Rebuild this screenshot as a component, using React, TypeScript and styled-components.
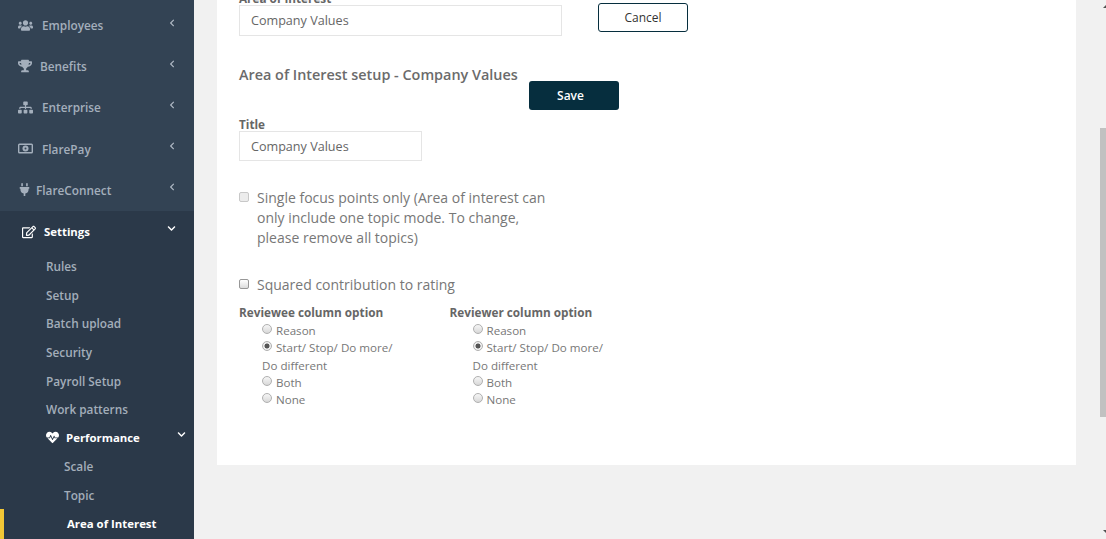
import React from 'react';
import styled, { createGlobalStyle } from 'styled-components';
import {
	FaChevronDown,
	FaChevronLeft,
	FaHeartbeat,
	FaPlug,
	FaRegEdit,
	FaSitemap,
	FaTrophy,
	FaUsers,
} from 'react-icons/fa';

const GlobalStyle = createGlobalStyle`
	html, body {
		margin: 0;
		height: 100%;
		overflow: hidden;
		background: #f1f1f1;
		font-family: "Open Sans", "Liberation Sans", sans-serif;
		color: #6b6b6b;
	}
`;

const Page = styled.div`
	display: flex;
	width: 1106px;
	height: 539px;
	overflow: hidden;
	position: relative;
`;

const Sidebar = styled.nav`
	width: 194px;
	flex: none;
	height: 539px;
	background: #334354;
	overflow: hidden;
`;

const TopLinks = styled.div`
	padding-top: 4.5px;
	height: 206.5px;
`;

const TopLink = styled.div`
	display: flex;
	align-items: center;
	height: 41.2px;
	padding-left: 18px;
	padding-right: 18px;
	font-size: 11.8px;
	font-weight: 600;
	color: #a4afbc;
	svg { flex: none; }
`;

const TopLabel = styled.span<{ $gap: number }>`
	margin-left: ${p => p.$gap}px;
	flex: 1;
`;

const Caret = styled.span<{ $light?: boolean }>`
	display: flex;
	margin-top: ${p => (p.$light ? -7 : -5)}px;
	color: ${p => (p.$light ? '#fff' : '#aeb8c4')};
`;

const SettingsBlock = styled.div`
	background: #2b3949;
	height: 328px;
	position: relative;
`;

const SettingsHead = styled.div`
	display: flex;
	align-items: center;
	height: 41px;
	padding-left: 22px;
	padding-right: 18px;
	font-size: 11.4px;
	font-weight: 700;
	color: #fff;
`;

const SubLink = styled.div<{ $indent?: number; $active?: boolean }>`
	display: flex;
	align-items: center;
	height: 28.6px;
	padding-left: ${p => p.$indent ?? 46}px;
	font-size: ${p => (p.$active ? 11.4 : 11.8)}px;
	color: ${p => (p.$active ? '#fff' : '#a3aeba')};
	font-weight: ${p => (p.$active ? 700 : 600)};
`;

const SubHead = styled(SubLink)`
	color: #fff;
	font-size: 11.4px;
	font-weight: 700;
	padding-right: 8px;
`;

const ActiveMark = styled.span`
	position: absolute;
	left: 0;
	bottom: 0;
	width: 4px;
	height: 30px;
	background: #f2c736;
`;

const Main = styled.main`
	flex: 1;
	padding: 0 30px 0 23px;
`;

const Card = styled.section`
	background: #fff;
	height: 465px;
	padding: 0 22px;
	overflow: hidden;
`;

const FieldLabel = styled.label`
	display: block;
	font-size: 11.75px;
	font-weight: 700;
	line-height: 13px;
	color: #666;
`;

const ClippedLabel = styled(FieldLabel)`
	margin-top: -8px;
`;

const TopRow = styled.div`
	display: flex;
	align-items: flex-start;
`;

const TextBox = styled.input<{ $width: number; $height: number }>`
	display: block;
	box-sizing: border-box;
	width: ${p => p.$width}px;
	height: ${p => p.$height}px;
	padding: 0 11px;
	border: 1px solid #e5e5e5;
	background: #fff;
	font: 400 12.6px "Open Sans", "Liberation Sans", sans-serif;
	color: #666;
	outline: none;
`;

const CancelButton = styled.button`
	width: 90px;
	height: 29px;
	margin-left: 36px;
	margin-top: -2px;
	box-sizing: border-box;
	border: 1px solid #062e3e;
	border-radius: 3px;
	background: #fff;
	font: 400 12px "Open Sans", "Liberation Sans", sans-serif;
	color: #333;
	padding: 0;
`;

const SetupRow = styled.div`
	display: flex;
	align-items: flex-start;
	margin-top: 30px;
`;

const SetupTitle = styled.h3`
	margin: 0;
	width: 290px;
	font-size: 14.4px;
	font-weight: 600;
	line-height: 18px;
	color: #6b6b6b;
	white-space: nowrap;
`;

const SaveButton = styled.button`
	width: 90px;
	height: 29px;
	margin-top: 15px;
	padding: 0 7px 0 0;
	border: none;
	border-radius: 3px;
	background: #062e3e;
	font: 600 12px "Open Sans", "Liberation Sans", sans-serif;
	color: #fff;
`;

const TitleField = styled.div`
	margin-top: 8px;
`;

const CheckRow = styled.label<{ $gapTop: number }>`
	display: flex;
	align-items: flex-start;
	width: 320px;
	margin-top: ${p => p.$gapTop}px;
	font-size: 14px;
	line-height: 20px;
	color: #777;
`;

const CheckBox = styled.input.attrs({ type: 'checkbox' })<{ $dim?: boolean }>`
	appearance: none;
	flex: none;
	box-sizing: border-box;
	width: 10px;
	height: 10px;
	margin: 4px 8px 0 0;
	border: 1px solid ${p => (p.$dim ? '#c8c8c8' : '#979797')};
	border-radius: 2px;
	background: ${p => (p.$dim ? '#ececec' : 'linear-gradient(#fff, #dcdcdc)')};
`;

const Columns = styled.div`
	display: flex;
	margin-top: 10px;
`;

const Column = styled.div`
	width: 210.5px;
`;

const ColumnTitle = styled.div`
	font-size: 11.75px;
	font-weight: 700;
	line-height: 14px;
	color: #666;
`;

const RadioList = styled.div`
	margin-top: 3px;
	padding-left: 23px;
	width: 135px;
	font-size: 11.6px;
	line-height: 17.25px;
	color: #777;
`;

const RadioLine = styled.div`
	display: block;
`;

const Radio = styled.input.attrs({ type: 'radio' })`
	appearance: none;
	box-sizing: border-box;
	width: 10px;
	height: 10px;
	margin: 0 4px 0 0;
	vertical-align: 1px;
	border: 1px solid #b0b0b0;
	border-radius: 50%;
	background: linear-gradient(#f6f6f6, #d8d8d8);

	&:checked {
		background: radial-gradient(circle, #555 0 2.2px, #ededed 2.8px);
	}
`;

const Scrollbar = styled.div`
	position: absolute;
	top: 0;
	right: 0;
	width: 6px;
	height: 539px;
`;

const ScrollThumb = styled.div`
	position: absolute;
	top: 128px;
	left: 0;
	width: 6px;
	height: 289px;
	background: #c1c1c1;
`;

const ScrollArrow = styled.span<{ $down?: boolean }>`
	position: absolute;
	right: 0;
	${p => (p.$down ? 'bottom: 6px;' : 'top: 5px;')}
	width: 0;
	height: 0;
	border-left: 3px solid transparent;
	${p => (p.$down ? 'border-top: 3px solid #505050;' : 'border-bottom: 3px solid #505050;')}
`;

const MoneyIcon: React.FC = () => (
	<svg width="15" height="15" viewBox="0 0 15 15">
		<rect x="0.7" y="3.2" width="13.6" height="8.6" rx="0.8" fill="none" stroke="currentColor" strokeWidth="1.4" />
		<circle cx="7.5" cy="7.5" r="3" fill="currentColor" />
		<circle cx="7.5" cy="7.5" r="1" fill="#334354" />
	</svg>
);

const topLinks = [
	{ label: 'Employees', icon: <FaUsers size={15} />, gap: 9 },
	{ label: 'Benefits', icon: <FaTrophy size={14} />, gap: 8 },
	{ label: 'Enterprise', icon: <FaSitemap size={15} />, gap: 9 },
	{ label: 'FlarePay', icon: <MoneyIcon />, gap: 9 },
	{ label: 'FlareConnect', icon: <FaPlug size={13} />, gap: 5 },
];

const settingsLinks = ['Rules', 'Setup', 'Batch upload', 'Security', 'Payroll Setup', 'Work patterns'];

const radioOptions = ['Reason', 'Start/ Stop/ Do more/ Do different', 'Both', 'None'];

const RadioColumn: React.FC<{ title: string; name: string }> = ({ title, name }) => (
	<Column>
		<ColumnTitle>{title}</ColumnTitle>
		<RadioList>
			{radioOptions.map((o, i) => (
				<RadioLine key={o}>
					<Radio name={name} defaultChecked={i === 1} />
					{o}
				</RadioLine>
			))}
		</RadioList>
	</Column>
);

const App: React.FC = () => (
	<Page>
		<GlobalStyle />
		<Sidebar>
			<TopLinks>
				{topLinks.map(l => (
					<TopLink key={l.label}>
						{l.icon}
						<TopLabel $gap={l.gap}>{l.label}</TopLabel>
						<Caret><FaChevronLeft size={8} /></Caret>
					</TopLink>
				))}
			</TopLinks>
			<SettingsBlock>
				<SettingsHead>
					<FaRegEdit size={14} />
					<TopLabel $gap={8}>Settings</TopLabel>
					<Caret $light><FaChevronDown size={9} /></Caret>
				</SettingsHead>
				{settingsLinks.map(l => <SubLink key={l}>{l}</SubLink>)}
				<SubHead>
					<FaHeartbeat size={13} />
					<TopLabel $gap={7}>Performance</TopLabel>
					<Caret $light><FaChevronDown size={9} /></Caret>
				</SubHead>
				<SubLink $indent={64}>Scale</SubLink>
				<SubLink $indent={64}>Topic</SubLink>
				<SubLink $indent={67} $active>Area of Interest</SubLink>
				<ActiveMark />
			</SettingsBlock>
		</Sidebar>
		<Main>
			<Card>
				<ClippedLabel>Area of Interest</ClippedLabel>
				<TopRow>
					<TextBox $width={323} $height={31} defaultValue="Company Values" />
					<CancelButton>Cancel</CancelButton>
				</TopRow>
				<SetupRow>
					<SetupTitle>Area of Interest setup - Company Values</SetupTitle>
					<SaveButton>Save</SaveButton>
				</SetupRow>
				<TitleField>
					<FieldLabel>Title</FieldLabel>
					<TextBox $width={183} $height={30} defaultValue="Company Values" />
				</TitleField>
				<CheckRow $gapTop={27}>
					<CheckBox $dim disabled />
					<span>Single focus points only (Area of interest can only include one topic mode. To change, please remove all topics)</span>
				</CheckRow>
				<CheckRow $gapTop={27}>
					<CheckBox />
					<span>Squared contribution to rating</span>
				</CheckRow>
				<Columns>
					<RadioColumn title="Reviewee column option" name="reviewee" />
					<RadioColumn title="Reviewer column option" name="reviewer" />
				</Columns>
			</Card>
		</Main>
		<Scrollbar>
			<ScrollArrow />
			<ScrollThumb />
			<ScrollArrow $down />
		</Scrollbar>
	</Page>
);

export default App;
